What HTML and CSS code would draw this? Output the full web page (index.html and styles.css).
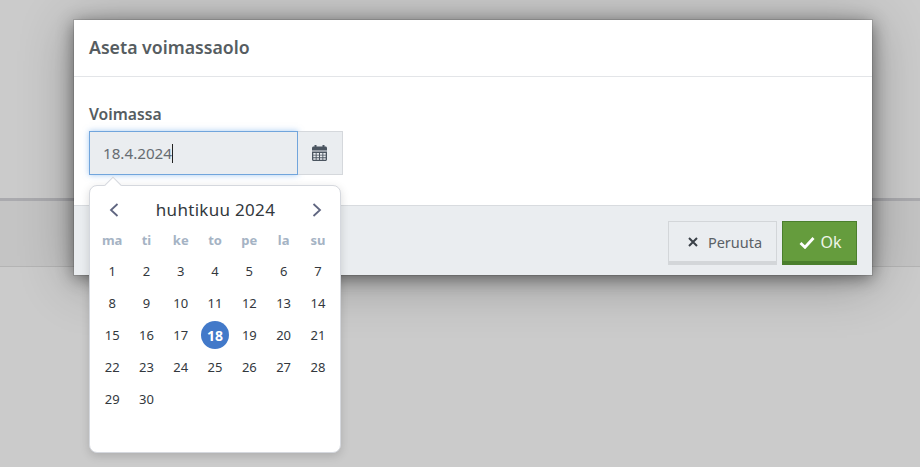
FILE: index.html
```html
<!DOCTYPE html>
<html lang="fi">
<head>
  <meta charset="UTF-8">
  <title>Aseta voimassaolo</title>
  <link rel="stylesheet" href="styles.css">
</head>
<body>

  <!-- Page behind the dialog -->
  <div class="page-behind">
    <div class="page-row"></div>
  </div>

  <!-- Dialog -->
  <div class="modal">
    <div class="modal-header">Aseta voimassaolo</div>
    <div class="modal-body">
      <label class="field-label" for="valid-date">Voimassa</label>
      <div class="input-group">
        <div class="date-input" id="valid-date">18.4.2024<span class="caret"></span></div>
        <div class="input-addon">
          <svg width="15" height="16" viewBox="0 0 15 16" fill="#4b5560">
            <path d="M2.500 0h2v1.500h6V0h2v1.500h1c.8 0 1.500.7 1.500 1.500v2.500H0V3c0-.8.7-1.500 1.500-1.500h1z"/>
            <path fill-rule="evenodd" d="M0 6.500h15V14.500c0 .8-.7 1.500-1.500 1.500h-12C.7 16 0 15.300 0 14.500zM1.300 8v1.700h2.400V8zM4.600 8v1.700h2.400V8zM8 8v1.700h2.400V8zM11.300 8v1.700h2.400V8zM1.300 10.600v1.700h2.400v-1.700zM4.600 10.600v1.700h2.400v-1.700zM8 10.600v1.700h2.400v-1.700zM11.300 10.600v1.700h2.400v-1.700zM1.300 13.200v1.600h2.400v-1.600zM4.600 13.200v1.600h2.400v-1.600zM8 13.200v1.600h2.400v-1.600zM11.300 13.200v1.600h2.400v-1.600z"/>
          </svg>
        </div>
      </div>
    </div>
    <div class="modal-footer">
      <button class="btn btn-cancel">
        <svg width="12" height="12" viewBox="0 0 12 12"><path d="M2 2l8 8M10 2l-8 8" stroke="#3b4148" stroke-width="2" fill="none"/></svg>
        Peruuta
      </button>
      <button class="btn btn-ok">
        <svg width="16" height="13" viewBox="0 0 16 13"><path d="M1.500 7l4.500 4.300L14.500 2" stroke="#fff" stroke-width="2.800" fill="none"/></svg>
        Ok
      </button>
    </div>
  </div>

  <!-- Date picker popup -->
  <div class="datepicker">
    <div class="dp-arrow"></div>
    <div class="dp-head">
      <svg width="12" height="16" viewBox="0 0 12 16"><path d="M9.500 2L3 8l6.500 6" stroke="#5f6580" stroke-width="1.800" fill="none"/></svg>
      <span class="dp-title">huhtikuu 2024</span>
      <svg width="12" height="16" viewBox="0 0 12 16"><path d="M2.500 2L9 8l-6.500 6" stroke="#5f6580" stroke-width="1.800" fill="none"/></svg>
    </div>
    <div class="dp-grid dp-weekdays">
      <span>ma</span><span>ti</span><span>ke</span><span>to</span><span>pe</span><span>la</span><span>su</span>
    </div>
    <div class="dp-grid dp-days">
      <span>1</span><span>2</span><span>3</span><span>4</span><span>5</span><span>6</span><span>7</span>
      <span>8</span><span>9</span><span>10</span><span>11</span><span>12</span><span>13</span><span>14</span>
      <span>15</span><span>16</span><span>17</span><span class="selected">18</span><span>19</span><span>20</span><span>21</span>
      <span>22</span><span>23</span><span>24</span><span>25</span><span>26</span><span>27</span><span>28</span>
      <span>29</span><span>30</span>
    </div>
  </div>

</body>
</html>
```

FILE: styles.css
```css
* {
  box-sizing: border-box;
}

html, body {
  height: 100%;
}

body {
  margin: 0;
  overflow: hidden;
  background-color: #cbcbcb;
  font-family: 'Noto Sans', sans-serif;
  color: #3b4148;
}

/* Page behind the dialog, dimmed */
.page-behind {
  padding-top: 198px;
}

.page-row {
  height: 69px;
  background-color: #c4c4c4;
  border-top: 3px solid #aaaaae;
  border-bottom: 1px solid #b4b4b4;
}

/* Dialog */
.modal {
  position: absolute;
  left: 74px;
  top: 20px;
  width: 798px;
  height: 255px;
  display: flex;
  flex-direction: column;
  background-color: #fff;
  box-shadow: 0 0 0 1px rgba(0, 0, 0, 0.1), 0 3px 16px rgba(0, 0, 0, 0.45), 0 6px 50px rgba(0, 0, 0, 0.3);
}

.modal-header {
  height: 57px;
  padding: 16px 15px 0;
  font-size: 17.700px;
  line-height: 22px;
  font-weight: 600;
  color: #565d61;
  border-bottom: 1px solid #e3e5e8;
}

.modal-body {
  flex: 1;
  padding: 27px 15px 0;
}

.field-label {
  display: block;
  font-size: 15.700px;
  line-height: 20px;
  font-weight: 600;
  color: #565d61;
  margin-bottom: 7px;
}

.input-group {
  display: flex;
  height: 44px;
}

.date-input {
  width: 209px;
  padding-left: 13px;
  display: flex;
  align-items: center;
  font-size: 15.200px;
  color: #666c72;
  background-color: #eaedf0;
  border: 1px solid #71a5dc;
  box-shadow: 0 0 6px rgba(80, 150, 230, 0.5);
}

.caret {
  width: 1px;
  height: 19px;
  background-color: #222;
}

.input-addon {
  width: 45px;
  padding-right: 2px;
  display: flex;
  align-items: center;
  justify-content: center;
  background-color: #eaedf0;
  border: 1px solid #d5d8dc;
  border-left: none;
}

.modal-footer {
  height: 70px;
  display: flex;
  justify-content: flex-end;
  gap: 5px;
  padding: 15px;
  background-color: #eaedf0;
  border-top: 1px solid #d8dbdf;
}

.btn {
  height: 44px;
  padding-top: 2px;
  display: flex;
  align-items: center;
  justify-content: center;
  gap: 9px;
  font-family: inherit;
  font-size: 14.500px;
}

.btn-cancel {
  width: 109px;
  padding-left: 10px;
  color: #5b6166;
  background-color: #eaedf0;
  border: 1px solid #d3d6d9;
  border-bottom: 4px solid #d3d6d9;
}

.btn-ok {
  width: 75px;
  padding-left: 8px;
  gap: 5px;
  font-size: 16px;
  color: #eef5e8;
  background-color: #659c3d;
  border: 1px solid #4b7f2d;
  border-bottom: 4px solid #4b7f2d;
}

/* Date picker */
.datepicker {
  position: absolute;
  left: 89px;
  top: 185px;
  width: 252px;
  height: 268px;
  padding: 0 5px;
  background-color: #fff;
  border: 1px solid #d5d8de;
  border-radius: 8px;
  box-shadow: 0 3px 10px rgba(0, 0, 0, 0.15);
}

.dp-arrow {
  position: absolute;
  left: 17px;
  top: -7px;
  width: 12px;
  height: 12px;
  background-color: #fff;
  border-top: 1px solid #d5d8de;
  border-left: 1px solid #d5d8de;
  transform: rotate(45deg);
}

.dp-head {
  height: 45px;
  padding: 2px 12px 0 13px;
  display: flex;
  align-items: center;
  justify-content: space-between;
}

.dp-title {
  font-size: 17px;
  letter-spacing: 0.300px;
  color: #33383d;
}

.dp-grid {
  display: grid;
  grid-template-columns: repeat(7, 34.300px);
}

.dp-grid span {
  text-align: center;
}

.dp-weekdays {
  font-size: 13px;
  line-height: 18px;
  font-weight: 700;
  color: #a5b3c4;
  margin-bottom: 6px;
}

.dp-days {
  grid-auto-rows: 32px;
  font-size: 13px;
  color: #33383d;
}

.dp-days span {
  display: flex;
  align-items: center;
  justify-content: center;
}

.dp-days .selected {
  justify-self: center;
  width: 28px;
  height: 28px;
  align-self: center;
  border-radius: 50%;
  font-weight: 700;
  font-size: 14px;
  color: #fff;
  background-color: #4279c9;
}
```
